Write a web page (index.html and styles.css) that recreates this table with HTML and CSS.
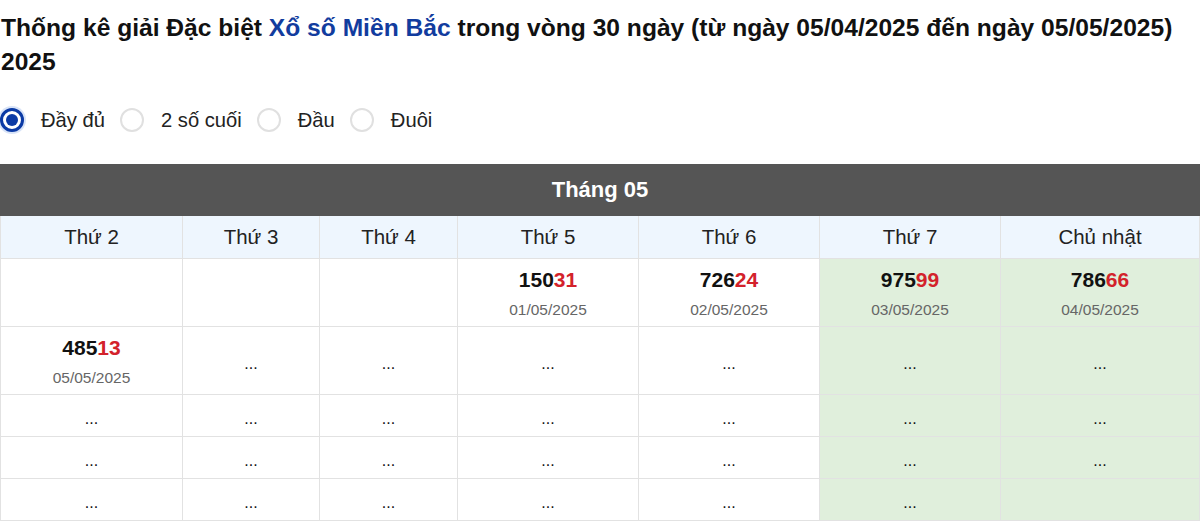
FILE: index.html
```html
<!DOCTYPE html>
<html lang="vi">
<head>
<meta charset="utf-8">
<title>Thống kê giải Đặc biệt</title>
<link rel="stylesheet" href="styles.css">
</head>
<body>
<h2 class="title">Thống kê giải Đặc biệt <a class="link" href="#">Xổ số Miền Bắc</a> trong vòng 30 ngày (từ ngày 05/04/2025 đến ngày 05/05/2025) 2025</h2>
<div class="options">
  <label class="opt"><span class="radio checked"></span><span class="opt-text">Đầy đủ</span></label>
  <label class="opt"><span class="radio"></span><span class="opt-text">2 số cuối</span></label>
  <label class="opt"><span class="radio"></span><span class="opt-text">Đầu</span></label>
  <label class="opt"><span class="radio"></span><span class="opt-text">Đuôi</span></label>
</div>
<table class="cal">
  <colgroup>
    <col class="c1"><col class="c2"><col class="c3"><col class="c4"><col class="c5"><col class="c6"><col class="c7">
  </colgroup>
  <thead>
    <tr><th class="month" colspan="7">Tháng 05</th></tr>
    <tr class="days">
      <th>Thứ 2</th><th>Thứ 3</th><th>Thứ 4</th><th>Thứ 5</th><th>Thứ 6</th><th>Thứ 7</th><th>Chủ nhật</th>
    </tr>
  </thead>
  <tbody>
    <tr class="tall">
      <td class="empty"></td><td class="empty"></td><td class="empty"></td>
      <td class="res"><div class="num">150<span class="red">31</span></div><div class="date">01/05/2025</div></td>
      <td class="res"><div class="num">726<span class="red">24</span></div><div class="date">02/05/2025</div></td>
      <td class="res wk"><div class="num">975<span class="red">99</span></div><div class="date">03/05/2025</div></td>
      <td class="res wk"><div class="num">786<span class="red">66</span></div><div class="date">04/05/2025</div></td>
    </tr>
    <tr class="tall">
      <td class="res"><div class="num">485<span class="red">13</span></div><div class="date">05/05/2025</div></td>
      <td class="dots">...</td><td class="dots">...</td><td class="dots">...</td><td class="dots">...</td>
      <td class="dots wk">...</td><td class="dots wk">...</td>
    </tr>
    <tr class="short">
      <td class="dots">...</td><td class="dots">...</td><td class="dots">...</td><td class="dots">...</td><td class="dots">...</td>
      <td class="dots wk">...</td><td class="dots wk">...</td>
    </tr>
    <tr class="short">
      <td class="dots">...</td><td class="dots">...</td><td class="dots">...</td><td class="dots">...</td><td class="dots">...</td>
      <td class="dots wk">...</td><td class="dots wk">...</td>
    </tr>
    <tr class="short">
      <td class="dots">...</td><td class="dots">...</td><td class="dots">...</td><td class="dots">...</td><td class="dots">...</td>
      <td class="dots wk">...</td><td class="empty wk"></td>
    </tr>
  </tbody>
</table>
</body>
</html>
```
FILE: styles.css
```css
html, body {
  margin: 0;
  padding: 0;
  background: #fff;
}
body {
  font-family: "Liberation Sans", Arial, sans-serif;
  color: #111;
}
.title {
  margin: 11px 0 0 1px;
  font-size: 24.6px;
  line-height: 34px;
  font-weight: bold;
  color: #111;
}
.link {
  color: #123c9e;
  text-decoration: none;
}
.options {
  display: flex;
  align-items: center;
  margin-top: 29px;
  height: 24px;
}
.opt {
  display: flex;
  align-items: center;
  margin-right: 15px;
}
.radio {
  box-sizing: border-box;
  width: 24px;
  height: 24px;
  border-radius: 50%;
  border: 2px solid #e0e0e0;
  background: #fff;
  margin-right: 17px;
  position: relative;
}
.radio.checked {
  border: 3px solid #0b3aa5;
  box-shadow: 0 0 0 2px #d8e3f7;
}
.radio.checked::after {
  content: "";
  position: absolute;
  left: 3px;
  top: 3px;
  width: 12px;
  height: 12px;
  border-radius: 50%;
  background: #0b3aa5;
}
.opt-text {
  font-size: 20.2px;
  color: #222;
}
.cal {
  margin-top: 32px;
  width: 1199px;
  border-collapse: collapse;
  table-layout: fixed;
}
.c1 { width: 182px; }
.c2 { width: 137px; }
.c3 { width: 138px; }
.c4 { width: 181px; }
.c5 { width: 181px; }
.c6 { width: 181px; }
.c7 { width: 199px; }
.cal th, .cal td {
  border: 1px solid #e2e2e2;
  text-align: center;
  padding: 0;
}
.cal th.month {
  background: #555;
  color: #fff;
  font-size: 22px;
  font-weight: bold;
  height: 50px;
  border-color: #555;
}
.days th {
  background: #eef6fe;
  font-weight: normal;
  font-size: 20.5px;
  color: #222;
  height: 42px;
}
.tall td.empty {
  height: 67px;
}
.short td.empty {
  height: 41px;
}
.cal td.res {
  vertical-align: top;
  padding-top: 8px;
  height: 59px;
}
.num {
  font-size: 21px;
  font-weight: bold;
  line-height: 26px;
  color: #111;
}
.red {
  color: #d3222b;
}
.date {
  font-size: 15.5px;
  line-height: 22px;
  margin-top: 6px;
  color: #666;
}
.cal td.dots {
  font-size: 16px;
  color: #111;
  padding-top: 6px;
}
.tall td.dots {
  height: 61px;
}
.short td.dots {
  height: 35px;
}
.wk {
  background: #e0efdc;
}
```
